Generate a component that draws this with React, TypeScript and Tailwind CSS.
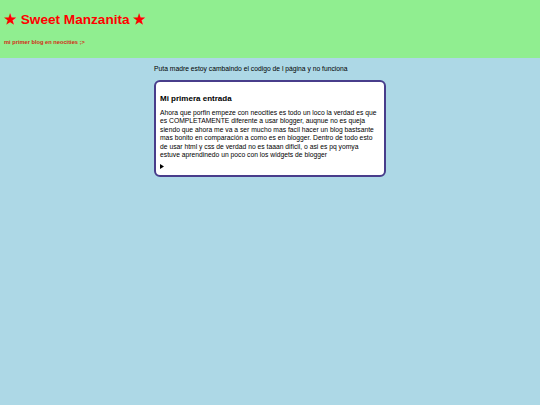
export default function App() {
  return (
    <div className="min-h-[405px] w-full bg-[#add8e6] font-['Liberation_Sans',Arial,sans-serif]">
      <header className="h-[58px] bg-[#90ee90] px-[4px] pt-[12px]">
        <h1 className="text-[13.6px] font-bold leading-[16px] text-[#ff0000]">★ Sweet Manzanita ★</h1>
        <p className="mt-[11px] text-[5.7px] font-bold leading-[7px] text-[#d42a14]">mi primer blog en neocities ;&gt;</p>
      </header>

      <main className="mx-auto w-[232px]">
        <p className="pt-[7px] text-[6.75px] leading-[8px] text-black">
          Puta madre estoy cambaindo el codigo de l página y no funciona
        </p>

        <article className="mt-[7px] rounded-[6px] border-[2px] border-[#483d8b] bg-white px-[4px] pb-[5px] pt-[12px]">
          <h3 className="text-[8px] font-bold leading-[10px] text-black">Mi primera entrada</h3>
          <p className="mt-[5px] text-[6.75px] leading-[8.4px] text-black">
            Ahora que porfin empeze con neocities es todo un loco la verdad es que es COMPLETAMENTE diferente a usar
            blogger, auqnue no es queja siendo que ahora me va a ser mucho mas facil hacer un blog bastsante mas bonito
            en comparación a como es en blogger. Dentro de todo esto de usar html y css de verdad no es taaan dificil, o
            asi es pq yomya estuve aprendinedo un poco con los widgets de blogger
          </p>
          <div className="mt-[3px] flex h-[8px] items-center">
            <svg width="4" height="5" viewBox="0 0 4 5">
              <path d="M0 0 L4 2.5 L0 5 Z" fill="black" />
            </svg>
          </div>
        </article>
      </main>
    </div>
  );
}
